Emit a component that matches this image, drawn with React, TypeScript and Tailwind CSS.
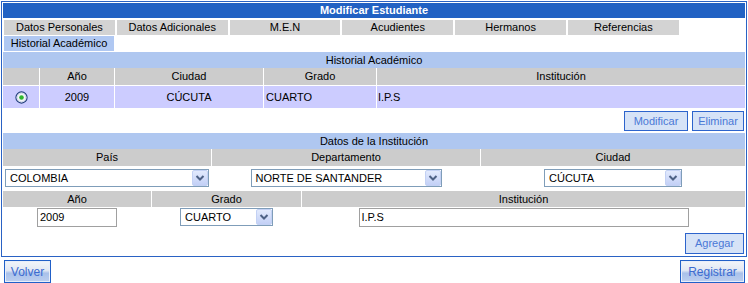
import React from "react";

function Arrow() {
  return (
    <div className="flex h-[16px] w-[16px] shrink-0 items-center justify-center rounded-[2px] border border-[#c3d1f4] bg-[linear-gradient(to_bottom,#e2eafd,#c3d0f6)]">
      <svg width="10" height="8" viewBox="0 0 10 8">
        <polyline points="1.5,2 5,5.5 8.5,2" fill="none" stroke="#4d6185" strokeWidth="2" />
      </svg>
    </div>
  );
}

function Sel({ cls, text }: { cls: string; text: string }) {
  return (
    <div className={`flex h-[18px] items-center justify-between border border-[#7f9db9] bg-white pl-[4px] ${cls}`}>
      <span className="leading-none">{text}</span>
      <Arrow />
    </div>
  );
}

function Radio() {
  return (
    <svg width="13" height="13" viewBox="0 0 13 13">
      <circle cx="6.5" cy="6.5" r="5.6" fill="#f4f6fa" stroke="#1f3c7c" strokeWidth="1.1" />
      <circle cx="6.5" cy="6.5" r="4.3" fill="none" stroke="#cdd6e8" strokeWidth="1" />
      <circle cx="6.5" cy="6.5" r="2.3" fill="#2fb82f" />
    </svg>
  );
}

function FlatBtn({ cls, label }: { cls: string; label: string }) {
  return (
    <div className={`flex items-center justify-center border border-[#2d64cc] bg-[#d6e3f7] text-[#4a78d6] ${cls}`}>
      {label}
    </div>
  );
}

function GradBtn({ cls, label }: { cls: string; label: string }) {
  return (
    <div
      className={`flex h-[23px] items-center justify-center border border-[#2160c8] bg-[linear-gradient(to_bottom,#f2f5fa_0%,#e2e8f3_45%,#a9c1ea_58%,#bccff0_100%)] text-[12px] text-[#3b6bd0] shadow-[inset_0_0_0_1px_#e8eef9] ${cls}`}
    >
      {label}
    </div>
  );
}

const tabs = ["Datos Personales", "Datos Adicionales", "M.E.N", "Acudientes", "Hermanos", "Referencias"];

export default function App() {
  return (
    <div className="h-[283px] w-[748px] bg-white pl-[1px] pt-[1px] font-['Liberation_Sans',Arial,sans-serif] text-[11px] text-black">
      <div className="w-[746px] border border-[#2a62c4] p-[1px] pb-[2px]">
        {/* Title */}
        <div className="flex h-[15px] items-center justify-center bg-[#2161c3] text-[11px] font-bold text-white">
          Modificar Estudiante
        </div>
        {/* Tabs */}
        <div className="mt-[2px] flex gap-[2px] pl-[1px]">
          {tabs.map((t) => (
            <div key={t} className="flex h-[15px] w-[110.8px] items-center justify-center bg-[#d3d3d3]">
              {t}
            </div>
          ))}
        </div>
        <div className="mt-[1px] flex pl-[1px]">
          <div className="flex h-[15px] w-[110px] items-center justify-center bg-[#b0c8f2]">Historial Académico</div>
        </div>
        {/* Historial header */}
        <div className="mt-[1px] flex h-[16px] items-center justify-center bg-[#afc7f0]">Historial Académico</div>
        <div className="flex h-[17px] gap-[1px]">
          <div className="w-[36px] bg-[#cccccc]" />
          <div className="flex w-[74px] items-center justify-center bg-[#cccccc]">Año</div>
          <div className="flex w-[148px] items-center justify-center bg-[#cccccc]">Ciudad</div>
          <div className="flex w-[112px] items-center justify-center bg-[#cccccc]">Grado</div>
          <div className="flex w-[368px] items-center justify-center bg-[#cccccc]">Institución</div>
        </div>
        <div className="mt-[1px] flex h-[22px] gap-[1px]">
          <div className="flex w-[36px] items-center justify-center bg-[#ccccff]">
            <Radio />
          </div>
          <div className="flex w-[74px] items-center justify-center bg-[#ccccff]">2009</div>
          <div className="flex w-[148px] items-center justify-center bg-[#ccccff]">CÚCUTA</div>
          <div className="flex w-[112px] items-center bg-[#ccccff] pl-[2px]">CUARTO</div>
          <div className="flex w-[368px] items-center bg-[#ccccff] pl-[1px]">I.P.S</div>
        </div>
        <div className="mt-[3px] flex justify-end gap-[4px] pr-[1px]">
          <FlatBtn cls="h-[20px] w-[64px]" label="Modificar" />
          <FlatBtn cls="h-[20px] w-[52px]" label="Eliminar" />
        </div>
        {/* Datos de la institución */}
        <div className="mt-[2px] flex h-[16px] items-center justify-center bg-[#afc7f0]">Datos de la Institución</div>
        <div className="flex h-[17px] gap-[1px]">
          <div className="flex w-[208px] items-center justify-center bg-[#cccccc]">País</div>
          <div className="flex w-[268px] items-center justify-center bg-[#cccccc]">Departamento</div>
          <div className="flex w-[264px] items-center justify-center bg-[#cccccc]">Ciudad</div>
        </div>
        <div className="mt-[3px] flex gap-[1px]">
          <div className="flex w-[208px] justify-center">
            <Sel cls="w-[204px]" text="COLOMBIA" />
          </div>
          <div className="flex w-[268px] justify-center">
            <Sel cls="w-[191px]" text="NORTE DE SANTANDER" />
          </div>
          <div className="flex w-[264px] justify-center">
            <Sel cls="w-[138px]" text="CÚCUTA" />
          </div>
        </div>
        <div className="mt-[4px] flex h-[16px] gap-[1px]">
          <div className="flex w-[148px] items-center justify-center bg-[#cccccc]">Año</div>
          <div className="flex w-[149px] items-center justify-center bg-[#cccccc]">Grado</div>
          <div className="flex w-[443px] items-center justify-center bg-[#cccccc]">Institución</div>
        </div>
        <div className="mt-[1px] flex gap-[1px]">
          <div className="flex w-[148px] justify-center">
            <div className="flex h-[19px] w-[80px] items-center border border-[#a0a0a0] bg-white pl-[2px]">2009</div>
          </div>
          <div className="flex w-[149px] justify-center">
            <Sel cls="w-[93px]" text="CUARTO" />
          </div>
          <div className="flex w-[443px] justify-center">
            <div className="flex h-[19px] w-[330px] items-center border border-[#a0a0a0] bg-white pl-[2px]">I.P.S</div>
          </div>
        </div>
        <div className="mt-[6px] flex justify-end pr-[1px]">
          <FlatBtn cls="h-[21px] w-[59px]" label="Agregar" />
        </div>
      </div>
      <div className="mt-[3px] flex w-[746px] justify-between pl-[3px] pr-[2px]">
        <GradBtn cls="w-[47px]" label="Volver" />
        <GradBtn cls="w-[65px]" label="Registrar" />
      </div>
    </div>
  );
}
